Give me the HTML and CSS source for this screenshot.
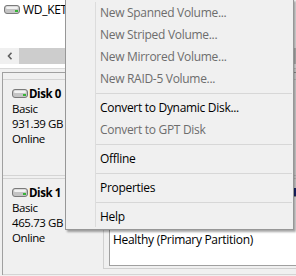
FILE: index.html
```html
<!DOCTYPE html>
<html lang="en">
<head>
    <meta charset="UTF-8">
    <title>Disk Management</title>
    <link rel="stylesheet" href="styles.css">
</head>
<body>
    <div class="console">
        <div class="volumes">
            <div class="vol-row">
                <svg class="drive" width="16" height="9" viewBox="0 0 16 9">
                    <rect x="0.5" y="0.5" width="15" height="8" rx="2.5" fill="#c4c4c4" stroke="#7a7a7a"/>
                    <rect x="2" y="1.5" width="12" height="2.5" rx="1.2" fill="#f2f2f2"/>
                    <rect x="11" y="5" width="3" height="2" fill="#36b336"/>
                </svg>
                <span>WD_KET</span>
            </div>
        </div>
        <div class="hscroll">
            <div class="hs-btn">
                <svg width="6" height="8" viewBox="0 0 6 8"><path d="M4.5 0.8 L1.5 4 L4.5 7.2" fill="none" stroke="#606060" stroke-width="1.6"/></svg>
            </div>
            <div class="hs-thumb"></div>
        </div>
        <div class="volumes-end"></div>
        <div class="splitter"></div>

        <div class="disks">
            <div class="disk">
                <div class="disk-label">
                    <div class="disk-name">
                        <svg class="drive" width="16" height="9" viewBox="0 0 16 9">
                            <rect x="0.5" y="0.5" width="15" height="8" rx="2.5" fill="#c4c4c4" stroke="#7a7a7a"/>
                            <rect x="2" y="1.5" width="12" height="2.5" rx="1.2" fill="#f2f2f2"/>
                            <rect x="11" y="5" width="3" height="2" fill="#36b336"/>
                        </svg>
                        <b>Disk 0</b>
                    </div>
                    <div class="line">Basic</div>
                    <div class="line">931.39 GB</div>
                    <div class="line">Online</div>
                </div>
                <div class="parts"></div>
            </div>

            <div class="disk">
                <div class="disk-label">
                    <div class="disk-name">
                        <svg class="drive" width="16" height="9" viewBox="0 0 16 9">
                            <rect x="0.5" y="0.5" width="15" height="8" rx="2.5" fill="#c4c4c4" stroke="#7a7a7a"/>
                            <rect x="2" y="1.5" width="12" height="2.5" rx="1.2" fill="#f2f2f2"/>
                            <rect x="11" y="5" width="3" height="2" fill="#36b336"/>
                        </svg>
                        <b>Disk 1</b>
                    </div>
                    <div class="line">Basic</div>
                    <div class="line">465.73 GB</div>
                    <div class="line">Online</div>
                </div>
                <div class="parts">
                    <div class="part">
                        <div class="part-head"></div>
                        <div class="part-body">
                            <div class="line">Healthy (Primary Partition)</div>
                        </div>
                    </div>
                </div>
            </div>
        </div>
    </div>

    <div class="menu">
        <div class="item disabled">New Spanned Volume...</div>
        <div class="item disabled">New Striped Volume...</div>
        <div class="item disabled">New Mirrored Volume...</div>
        <div class="item disabled">New RAID-5 Volume...</div>
        <div class="sep"></div>
        <div class="item">Convert to Dynamic Disk...</div>
        <div class="item disabled">Convert to GPT Disk</div>
        <div class="sep"></div>
        <div class="item">Offline</div>
        <div class="sep"></div>
        <div class="item">Properties</div>
        <div class="sep"></div>
        <div class="item">Help</div>
    </div>
</body>
</html>
```

FILE: styles.css
```css
body {
    margin: 0;
    width: 296px;
    height: 276px;
    overflow: hidden;
    position: relative;
    background: #f0f0f0;
    font-family: "Open Sans", "Noto Sans", sans-serif;
    font-size: 12px;
    letter-spacing: -0.3px;
    color: #000;
}
.volumes {
    height: 48px;
    background: #fff;
}
.vol-row {
    display: flex;
    align-items: center;
    gap: 3px;
    height: 19px;
    padding-left: 4px;
    white-space: nowrap;
}
.hscroll {
    display: flex;
    height: 16px;
    background: #f0f0f0;
}
.hs-btn {
    width: 19px;
    display: flex;
    align-items: center;
    justify-content: center;
}
.hs-thumb {
    flex: 1;
    background: #cdcdcd;
}
.volumes-end {
    height: 4px;
    background: #fff;
    border-bottom: 1px solid #d9d9d9;
}
.splitter {
    height: 3px;
}
.disks {
    margin-left: 2px;
    border-top: 1px solid #a0a0a0;
    border-left: 1px solid #a0a0a0;
    padding-top: 6px;
}
.disk {
    display: flex;
    height: 95px;
    margin-bottom: 2px;
    border-top: 1px solid #d4d4d4;
    border-bottom: 1px solid #d4d4d4;
}
.disk-label {
    width: 91px;
    padding: 6px 0 0 9px;
    background: #f0f0f0;
    font-size: 11.5px;
    letter-spacing: -0.4px;
}
.disk-name {
    display: flex;
    align-items: center;
    gap: 1px;
    height: 15px;
}
.line {
    height: 15px;
    line-height: 15px;
    white-space: nowrap;
}
.parts {
    flex: 1;
    display: flex;
}
.part {
    flex: 1;
    margin-top: 8px;
    margin-bottom: 5px;
    padding: 0 0 2px 5px;
    border-left: 1px solid #d0d0d0;
    border-bottom: 1px solid #d0d0d0;
    display: flex;
    flex-direction: column;
}
.part-head {
    height: 8px;
    background: #1c2a78;
    margin-top: 1px;
}
.part-body {
    flex: 1;
    background: #fff;
    border: 1px solid #a0a0a0;
    border-right: none;
    padding: 35px 0 0 3px;
}
.menu {
    position: absolute;
    left: 65px;
    top: -1px;
    width: 223px;
    padding: 2px 2px 1px 2px;
    background: #f0f0f0;
    border: 1px solid #979797;
    box-shadow: 2px 2px 2px rgba(0, 0, 0, 0.35);
}
.menu::before {
    content: "";
    position: absolute;
    left: 29px;
    top: 2px;
    bottom: 2px;
    width: 1px;
    background: #dcdcdc;
}
.item {
    height: 22px;
    line-height: 22px;
    padding-left: 32px;
    white-space: nowrap;
}
.item.disabled {
    color: #6d6d6d;
}
.sep {
    height: 1px;
    margin: 3px -1px 3px 28px;
    background: #d7d7d7;
}
```
